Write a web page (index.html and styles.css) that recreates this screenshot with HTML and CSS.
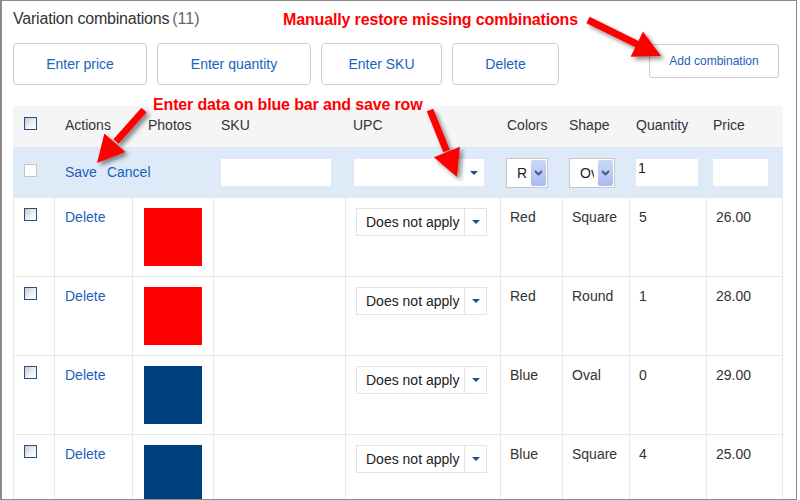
FILE: index.html
```html
<!DOCTYPE html>
<html>
<head>
<meta charset="utf-8">
<link rel="stylesheet" href="styles.css">
</head>
<body>
<div class="frame">
  <div class="title">Variation combinations<span class="count">(11)</span></div>
  <div class="toolbar">
    <button class="btn w-price">Enter price</button>
    <button class="btn w-qty">Enter quantity</button>
    <button class="btn w-sku">Enter SKU</button>
    <button class="btn w-del">Delete</button>
    <button class="btn btn-add">Add combination</button>
  </div>
  <div class="grid">
    <div class="row row-head">
      <div class="cell"><span class="chk chk-head"></span></div>
      <div class="cell">Actions</div>
      <div class="cell">Photos</div>
      <div class="cell">SKU</div>
      <div class="cell">UPC</div>
      <div class="cell">Colors</div>
      <div class="cell">Shape</div>
      <div class="cell">Quantity</div>
      <div class="cell">Price</div>
    </div>
    <div class="row row-edit">
      <div class="cell"><span class="chk chk-off"></span></div>
      <div class="cell"><a class="link">Save</a><a class="link link-gap">Cancel</a></div>
      <div class="cell"></div>
      <div class="cell"><div class="field w-sku-in"></div></div>
      <div class="cell"><div class="field upc"><span class="upc-fill"></span><span class="upc-btn"><span class="tri"></span></span></div></div>
      <div class="cell"><div class="mini w-colors"><span class="mini-text"><span class="mini-val">Red</span></span><span class="mini-btn"><svg width="9" height="6" viewBox="0 0 9 6"><polyline points="1,1 4.5,4.5 8,1" fill="none" stroke="#3f5585" stroke-width="1.8"/></svg></span></div></div>
      <div class="cell"><div class="mini w-shape"><span class="mini-text"><span class="mini-val">Oval</span></span><span class="mini-btn"><svg width="9" height="6" viewBox="0 0 9 6"><polyline points="1,1 4.5,4.5 8,1" fill="none" stroke="#3f5585" stroke-width="1.8"/></svg></span></div></div>
      <div class="cell"><div class="field w-qty-in">1</div></div>
      <div class="cell"><div class="field w-price-in"></div></div>
    </div>
    <div class="row row-data">
      <div class="cell"><span class="chk"></span></div>
      <div class="cell"><a class="link">Delete</a></div>
      <div class="cell"><div class="photo red"></div></div>
      <div class="cell"></div>
      <div class="cell"><div class="sel"><span class="sel-text">Does not apply</span><span class="sel-btn"><span class="tri"></span></span></div></div>
      <div class="cell">Red</div>
      <div class="cell">Square</div>
      <div class="cell">5</div>
      <div class="cell">26.00</div>
    </div>
    <div class="row row-data">
      <div class="cell"><span class="chk"></span></div>
      <div class="cell"><a class="link">Delete</a></div>
      <div class="cell"><div class="photo red"></div></div>
      <div class="cell"></div>
      <div class="cell"><div class="sel"><span class="sel-text">Does not apply</span><span class="sel-btn"><span class="tri"></span></span></div></div>
      <div class="cell">Red</div>
      <div class="cell">Round</div>
      <div class="cell">1</div>
      <div class="cell">28.00</div>
    </div>
    <div class="row row-data">
      <div class="cell"><span class="chk"></span></div>
      <div class="cell"><a class="link">Delete</a></div>
      <div class="cell"><div class="photo blue"></div></div>
      <div class="cell"></div>
      <div class="cell"><div class="sel"><span class="sel-text">Does not apply</span><span class="sel-btn"><span class="tri"></span></span></div></div>
      <div class="cell">Blue</div>
      <div class="cell">Oval</div>
      <div class="cell">0</div>
      <div class="cell">29.00</div>
    </div>
    <div class="row row-data">
      <div class="cell"><span class="chk"></span></div>
      <div class="cell"><a class="link">Delete</a></div>
      <div class="cell"><div class="photo blue"></div></div>
      <div class="cell"></div>
      <div class="cell"><div class="sel"><span class="sel-text">Does not apply</span><span class="sel-btn"><span class="tri"></span></span></div></div>
      <div class="cell">Blue</div>
      <div class="cell">Square</div>
      <div class="cell">4</div>
      <div class="cell">25.00</div>
    </div>
  </div>
</div>

<div class="note note-top">Manually restore missing combinations</div>
<div class="note note-mid">Enter data on blue bar and save row</div>

<svg class="arrows" width="800" height="500" viewBox="0 0 800 500">
  <defs>
    <filter id="sh" x="-30%" y="-30%" width="170%" height="170%">
      <feDropShadow dx="3" dy="3" stdDeviation="2" flood-color="#000" flood-opacity="0.45"/>
    </filter>
  </defs>
  <g filter="url(#sh)">
    <line x1="588" y1="20" x2="638" y2="44.6" stroke="#ff0000" stroke-width="7"/>
    <polygon points="630.6,56.7 661,56 643,31.5" fill="#ff0000"/>
  </g>
  <g filter="url(#sh)">
    <line x1="144" y1="110" x2="116" y2="141.5" stroke="#ff0000" stroke-width="7"/>
    <polygon points="125.4,152.1 97,163 104.4,133.5" fill="#ff0000"/>
  </g>
  <g filter="url(#sh)">
    <line x1="430" y1="110" x2="446.5" y2="151" stroke="#ff0000" stroke-width="7"/>
    <polygon points="459.9,146.8 457,177 433.9,157.2" fill="#ff0000"/>
  </g>
</svg>
</body>
</html>
```

FILE: styles.css
```css
body {
  margin: 0;
  font-family: "Liberation Sans", Arial, sans-serif;
  background: #fff;
}

.frame {
  box-sizing: border-box;
  width: 797px;
  height: 500px;
  border: 1px solid #8a8a8a;
  border-left-width: 2px;
  padding: 8px 0 0 11px;
  overflow: hidden;
  background: #fff;
}

.title {
  font-size: 16px;
  line-height: 20px;
  color: #333;
  letter-spacing: -0.2px;
}

.count {
  color: #666;
  margin-left: 3px;
  letter-spacing: 0;
}

.toolbar {
  display: flex;
  align-items: flex-start;
  gap: 10px;
  margin-top: 14px;
  padding-right: 17px;
  height: 42px;
}

.btn {
  box-sizing: border-box;
  height: 42px;
  padding: 0;
  border: 1px solid #cccccc;
  border-radius: 4px;
  background: #fff;
  color: #1b5fbd;
  font-family: "Liberation Sans", Arial, sans-serif;
  font-size: 14px;
  text-align: center;
}

.w-price { width: 134px; }
.w-qty { width: 154px; }
.w-sku { width: 121px; }
.w-del { width: 107px; }

.btn-add {
  margin-left: auto;
  margin-top: 1px;
  width: 130px;
  height: 34px;
  font-size: 12px;
  border-radius: 3px;
}

.grid {
  width: 770px;
  margin-top: 21px;
}

.row {
  display: grid;
  grid-template-columns: 42px 78px 81px 132px 155px 62px 67px 77px 76px;
  font-size: 14px;
  line-height: 18px;
  color: #333;
}

.cell {
  box-sizing: border-box;
  min-width: 0;
}

/* header */
.row-head {
  height: 41px;
  background: #f5f5f5;
  align-items: center;
}
.row-head .cell { padding-bottom: 4px; }
.row-head .cell:nth-child(1) { padding-left: 11px; align-self: start; padding-top: 11px; padding-bottom: 0; }
.row-head .cell:nth-child(2) { padding-left: 10px; }
.row-head .cell:nth-child(3) { padding-left: 15px; }
.row-head .cell:nth-child(4),
.row-head .cell:nth-child(5) { padding-left: 7px; }
.row-head .cell:nth-child(n+6) { padding-left: 6px; }

/* edit row */
.row-edit {
  height: 51px;
  background: #dfeaf9;
  align-items: center;
}
.row-edit .cell:nth-child(1) { padding-left: 11px; height: 13px; margin-top: -4px; }
.row-edit .cell:nth-child(2) { padding-left: 10px; padding-bottom: 2px; }
.row-edit .cell:nth-child(4) { padding-left: 7px; }
.row-edit .cell:nth-child(5) { padding-left: 8px; }
.row-edit .cell:nth-child(6) { padding-left: 5px; }
.row-edit .cell:nth-child(n+7) { padding-left: 6px; }

/* data rows */
.row-data {
  height: 79px;
}
.row-data .cell {
  border-right: 1px solid #e8e8e8;
  border-bottom: 1px solid #e8e8e8;
  padding-top: 10px;
}
.row-data .cell:nth-child(1) { border-left: 1px solid #e8e8e8; padding-left: 10px; }
.row-data .cell:nth-child(2) { padding-left: 10px; padding-top: 10px; }
.row-data .cell:nth-child(3) { padding-left: 11px; }
.row-data .cell:nth-child(5) { padding-left: 10px; }
.row-data .cell:nth-child(n+6) { padding-left: 9px; padding-top: 10px; }

.chk {
  display: block;
  box-sizing: border-box;
  width: 13px;
  height: 13px;
  border: 1px solid #22518c;
  background: linear-gradient(135deg, #c9c9c9 0%, #f2f2f2 60%, #ffffff 100%);
}
.chk-off {
  border-color: #c9c4b4;
  background: #fff;
}

.link {
  color: #1b5fbd;
  text-decoration: none;
}
.link-gap { margin-left: 10px; }

.photo {
  width: 58px;
  height: 58px;
}
.red { background: #ff0000; }
.blue { background: #00407e; }

.field {
  box-sizing: border-box;
  height: 27px;
  background: #fff;
}
.w-sku-in { width: 110px; }
.w-qty-in {
  width: 62px;
  padding: 1px 0 0 2px;
  font-size: 14px;
  line-height: 16px;
  color: #222;
}
.w-price-in { width: 55px; }

.upc {
  display: flex;
  width: 130px;
}
.upc-fill { flex: 1; }
.upc-btn {
  width: 21px;
  border-left: 1px solid #f1f3f6;
  display: flex;
  align-items: center;
  justify-content: center;
}

.tri {
  width: 0;
  height: 0;
  border-left: 4px solid transparent;
  border-right: 4px solid transparent;
  border-top: 4px solid #1d4e89;
}

.mini {
  display: flex;
  box-sizing: border-box;
  height: 30px;
  padding: 1px;
  border: 1px solid #c8c8c8;
  background: #fff;
}
.w-colors { width: 42px; }
.w-shape { width: 46px; }
.mini-text {
  flex: 1;
  min-width: 0;
  padding: 0 4px 0 9px;
  font-size: 14px;
  line-height: 26px;
  color: #222;
}
.mini-val {
  display: block;
  overflow: hidden;
  white-space: nowrap;
}
.mini-btn {
  width: 15px;
  border-radius: 2px;
  background: linear-gradient(#cbd7f6, #a8bcf0);
  display: flex;
  align-items: center;
  justify-content: center;
}

.sel {
  display: flex;
  box-sizing: border-box;
  width: 131px;
  height: 28px;
  border: 1px solid #e3e3e3;
  background: #fff;
}
.sel-text {
  flex: 1;
  padding-left: 9px;
  font-size: 14px;
  line-height: 26px;
  color: #222;
  white-space: nowrap;
}
.sel-btn {
  width: 21px;
  border-left: 1px solid #e3e3e3;
  display: flex;
  align-items: center;
  justify-content: center;
}

.note {
  position: absolute;
  font-family: "Liberation Sans", Arial, sans-serif;
  font-weight: bold;
  font-size: 16px;
  line-height: 18px;
  letter-spacing: -0.15px;
  color: #ff0000;
  white-space: nowrap;
}
.note-top { left: 283px; top: 11px; }
.note-mid { left: 153px; top: 96px; }

.arrows {
  position: absolute;
  left: 0;
  top: 0;
  pointer-events: none;
}
```
